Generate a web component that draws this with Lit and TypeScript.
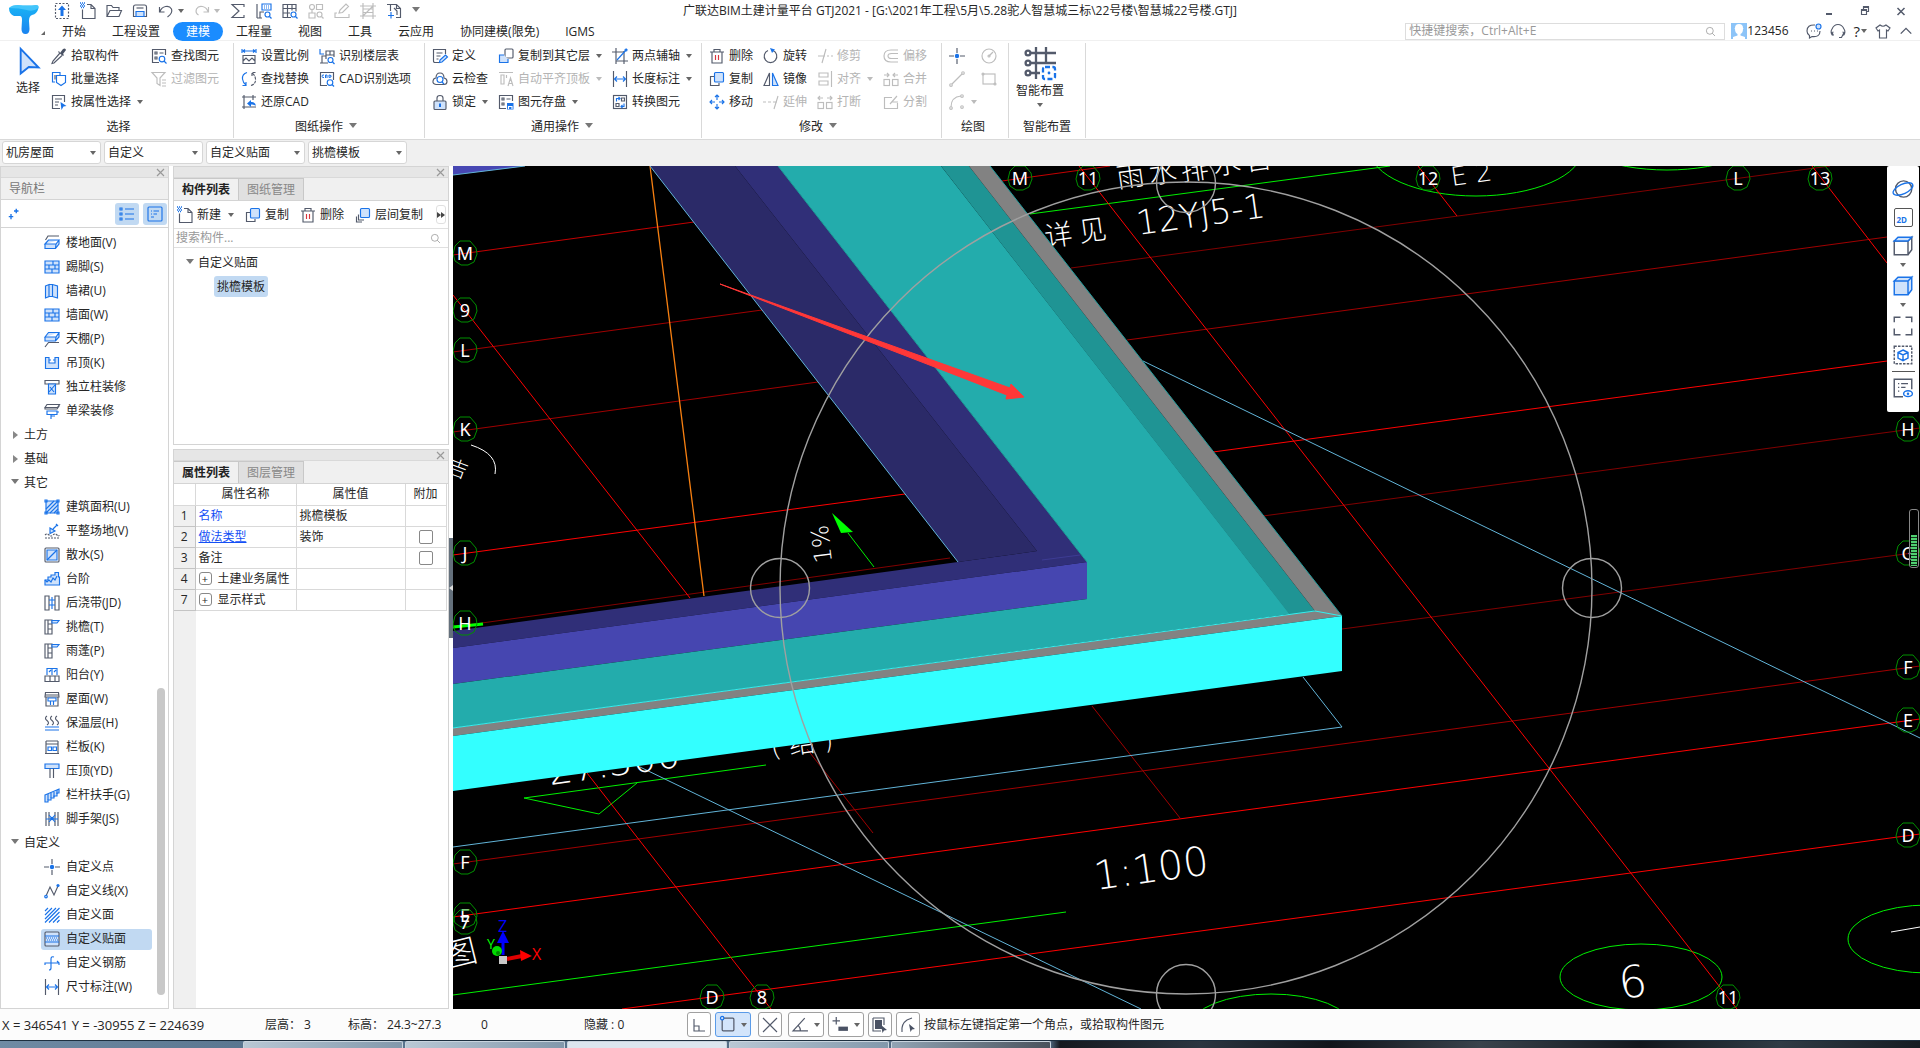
import { LitElement, html, svg, css, nothing, SVGTemplateResult } from "lit";
import { customElement, state } from "lit/decorators.js";
import { classMap } from "lit/directives/class-map.js";

type Art = SVGTemplateResult;

/* Icon artwork on a 16x16 grid. b = blue stroke, l = light fill, s = solid blue, k = solid dark. */
const ICONS: Record<string, Art> = {
  upload: svg`<rect x="1.5" y="0.5" width="13" height="15" stroke-dasharray="2 1.5"/><path class="s" d="M8 2.5 12 7H9.5v6h-3V7H4z"/>`,
  newFile: svg`<path d="M7 1.5h4l4 4v10H2.5V6.5M11 1.5v4h4"/><path class="b" d="M0 0h1M2 0h1M4 0h1M1 1.5h1M3 1.5h1M0 3h1M2 3h1M4 3h1M1 4.5h1M3 4.5h1" stroke-width="1.6"/>`,
  open: svg`<path d="M1 13.5v-11h4.5l1.5 2h6v3M1 13.5 4 7.5h11.5l-2.5 6z"/>`,
  save: svg`<path d="M1.5 4q0-2 2-2h9q2 0 2 2v9.5h-13z"/><path class="b l" d="M4 13.500V8.500h8v5z"/><path d="M4.500 5h7"/>`,
  undo: svg`<path d="M1.500 4v5h5M2 8.500C4 3 11 1.500 13.500 6q1.500 4-4 8"/>`,
  redo: svg`<path d="M14.500 4v5h-5M14 8.500C12 3 5 1.500 2.500 6q-1.500 4 2 6"/>`,
  sum: svg`<path d="M14 4V1.500H2L9 8l-7 6.500h12V12"/>`,
  floorSearch: svg`<path class="b" d="M6 1h9v6H6zM8 3h1M10 3h1M12 3h1M8 5h1M10 5h1M12 5h1"/><path d="M1 1v14M4 15V9h4M1 15h5"/><circle class="b" cx="11.500" cy="11.500" r="2.500"/><path class="b" d="m13.500 13.500 2 2"/>`,
  gridSearch: svg`<path d="M9 14.500H1v-13h13v7M1 5.500h13M1 10h7M5.500 1.500v13M10 1.500v6"/><circle class="b" cx="11.500" cy="11.500" r="2.500"/><path class="b" d="m13.500 13.500 2 2"/>`,
  partSearch: svg`<circle cx="4" cy="4" r="2.500"/><path d="M1 10h6v5H1zM8.500 1.500h6v5h-6zM4 6.500V10"/><circle cx="11.500" cy="11.500" r="2.500"/><path d="m13.500 13.500 2 2"/>`,
  pen: svg`<path d="m5 10 1-3 6-6 2.500 2.500-6 6zM3 10H1v4.500h14V11"/>`,
  rail: svg`<path d="M3 0v16M13 0v16M0 3h16M0 13h16M3 13 13 3M3 6h10M3 9.500h10"/>`,
  exportDoc: svg`<path d="M4.500 8V1.500H1M4.500 1.500h6l4 4v9H10M10.500 1.500v4h4M8 5l3 3v4"/><path class="b" d="M5 9v6.500M2 12.500h6"/>`,
  arrow: svg`<path class="b l" d="m3.500 0.500 11 11.500-6-.3-5 4z"/>`,
  pick: svg`<path class="k" d="m9 5 3-4q2.500-1.500 3 1l-3 4 1 1-1 1-5-4 1-1z"/><path d="m9 5-7 8-1 2.500 2-.5 8-7.500"/>`,
  batch: svg`<path class="b" d="M4 11H1.500V1.500H9V4"/><path d="m10 14.500-4.500-3V4.500h9V11.500z" class="b"/><path d="M4 8.500V4"/>`,
  propSelect: svg`<path d="M9 14.500H1.500v-13h12V8M4 5h7M4 8h4M4 11h3"/><path class="s" d="m9.500 8 6 4-3 .5L10.500 16z"/>`,
  findItem: svg`<path d="M8 14.500H1.500v-13h13V7M4 4h2v2H4zM8.500 5h4M4 9h2v2H4z"/><circle class="b" cx="11" cy="11" r="2.800"/><path class="b" d="m13 13 2.500 2.500"/>`,
  filter: svg`<path d="M1 1.500h13L9 7v7.500l-3-2V7zM11 9h4M11 12h4M11 15h4"/>`,
  scale: svg`<path class="b" d="M1 1v4M15 1v4M1 3h14M4 1.500 2 3l2 1.500M12 1.500 14 3l-2 1.500"/><path d="M2 7.500h12v8H2zM2 13l3-3 3 3 3-3 3 3"/>`,
  replace: svg`<path class="b" d="M6 1.500Q1 3 1.500 8q.5 4 3.500 6M5 11v3.500H1.500"/><path d="M10 14.500q5-1.500 4.500-6.500Q14 4 11 2M11 5V1.500h3.500" stroke-dasharray="3 1"/>`,
  restore: svg`<path d="M1 3h14M3 1v14M1 13h14M12 1v5"/><path class="s" d="M6 9.500 10 6v2q4-.5 5 4-2-2-5-1.500V13z"/>`,
  floorTable: svg`<path class="b" d="M1 1v5h4"/><path d="M3 15V8h4M1 15h8M7 11V3h8v6M11 3v4M7 7h8"/><circle class="b" cx="11.500" cy="12" r="2.500"/><path class="b" d="m13.500 14 2 2"/>`,
  cadOpt: svg`<path d="M8 14.500H1.500v-13h13V9"/><path class="b" d="M5 4q-2-.5-2 1.200T5 6.500M6.500 7V4h1.500v3M10 4v2.500q3 0 2-2z" stroke-width="1"/><circle class="b" cx="11" cy="11.500" r="2.800"/><path class="b" d="m13 13.500 2 2"/>`,
  define: svg`<path d="M7 14.500H3q-1.500 0-1.500-1.500V1.500h12V6M4.500 5h6M4.500 8h4M4.500 11h2"/><path class="b l" d="m8 12 5.500-5 2 2-5.500 5-2.500.5z"/>`,
  cloud: svg`<path d="M4 13.500q-3.500-.5-3-3.500T4 7q0-5 4-5t4 5q3 .5 3 3.500t-3 3z"/><circle class="b" cx="8" cy="8.500" r="3"/><path class="b" d="m10 11 2 2"/>`,
  lock: svg`<path d="M5 7V4q0-2.500 3-2.500T11 4v3"/><rect class="l" x="2" y="7" width="12" height="8.500" rx="1"/><path class="b" d="M8 9.500v3.500" stroke-width="2"/>`,
  copyFloor: svg`<rect x="7" y="1" width="8" height="9" rx="1"/><path class="b l" d="M6 7H1.500v7.500H10V11"/>`,
  align: svg`<path d="M1 1.500h14M3 4v9h3V4zM8.500 7V4M10 15l2.500-8L15 15M11 12.500h3"/>`,
  saveItem: svg`<path d="M8 14.500H1.500v-13h13V7M4 4h2v2H4zM8.500 5h4M4 9h2v2H4z"/><path class="s" d="M9 9h6.500v6.500H9z"/><path d="M10.500 15v-2.500H14V15" stroke="#fff"/>`,
  twoPoint: svg`<path d="M4 0v16M12 3v13M0 4h12M4 13h12"/><path class="b" d="M5 12 15 1"/><circle class="b" cx="14" cy="2" r="1"/>`,
  length: svg`<path d="M1.500 0v16M14.500 0v16"/><path class="b" d="M2 8h12M5 5.500 2.500 8 5 10.500M11 5.500 13.500 8 11 10.500"/>`,
  convert: svg`<rect x="1.500" y="1.500" width="13" height="13"/><path d="M4 9.500h3v3H4zM9.500 4h3v3h-3z"/><path class="b" d="M4.500 7.500V4.500H8M6.500 3 8 4.500 6.500 6M9 12.500h3V9.500M10.500 11 9 12.500 10.500 14"/>`,
  trash: svg`<path d="M1 4h14M5 4V1.500h6V4M3 4v11h10V4"/><path d="M6.500 7v5M9.500 7v5" stroke="#d9363e"/>`,
  copy: svg`<path d="M5 5.500H1.500v9H10V12"/><rect class="b l" x="5.500" y="1.500" width="9" height="9.500" rx="1"/>`,
  move: svg`<path class="b" d="M8 1v5M8 10v5M1 8h5M10 8h5M6 3l2-2 2 2M6 13l2 2 2-2M3 6 1 8l2 2M13 6l2 2-2 2"/>`,
  rotate: svg`<path d="M10 2.500A6.300 6.300 0 1 1 5 2.500"/><path class="s" d="M7 0l5 1.500L9 5z"/>`,
  mirror: svg`<path d="M6.500 2v12.500H1z"/><path class="b l" d="M9.500 2v12.500H15z"/>`,
  extend: svg`<path d="M0 8h3M5 8h3M10 8h4M15 2 11 15"/>`,
  trim: svg`<path d="M1 8h7M10 8h2M14 8h2M9 1 5 15"/>`,
  alignTo: svg`<path d="M14.500 0v16M2 2h9v4H2zM2 10h9v4H2z"/>`,
  breakUp: svg`<rect x="1" y="8.500" width="5.500" height="6"/><rect x="9.500" y="8.500" width="5.500" height="6"/><path d="M1 4h5M3 2 1 4l2 2M15 4h-5M13 2l2 2-2 2"/>`,
  merge: svg`<rect x="1" y="8.500" width="5.500" height="6"/><rect x="9.500" y="8.500" width="5.500" height="6"/><path d="M1 4h5M4 2 6 4 4 6M15 4h-5M12 2l-2 2 2 2"/>`,
  offset: svg`<path d="M15 2H8Q1 2 1 8t7 6h7M15 5.500H8.500Q5 5.500 5 8t3.500 2.500H15"/>`,
  split: svg`<path d="M9 3.500H1.500v11h13V9M7 10l7-8M9 8h6"/>`,
  point: svg`<path d="M8 0v5M8 11v5M0 8h5M11 8h5"/><circle class="s" cx="8" cy="8" r="2.200"/>`,
  line: svg`<path d="M3 13 13 3"/><circle cx="2" cy="14" r="1.300"/><circle cx="14" cy="2" r="1.300"/>`,
  arc: svg`<path d="M2 13Q2 3 12 2"/><circle cx="2" cy="14" r="1.300"/><circle cx="13" cy="2" r="1.300"/><circle cx="13" cy="13" r="1.300"/>`,
  circle: svg`<circle cx="8" cy="8" r="7"/><path d="m8 8 4-4"/><circle cx="8" cy="8" r="1"/>`,
  rect: svg`<rect x="2" y="3" width="12" height="10"/><circle cx="2" cy="3" r="1"/><circle cx="14" cy="13" r="1"/>`,
  smart: svg`<path d="M3 3h13M3 8h13M3 13h5M6 0v16M11 0v8"/><circle cx="2" cy="3" r="1.200"/><circle cx="2" cy="8" r="1.200"/><circle cx="2" cy="13" r="1.200"/><rect class="b" x="9.500" y="10" width="6" height="6" rx="1" stroke-dasharray="2.500 1.200"/><circle class="s" cx="12.500" cy="13" r=".7"/>`,
  slab: svg`<path class="b l" d="M1 9 4.500 5H15L12 9zM1 9v4.500h10.500L15 9V5M12 9l-.5 4.500"/><path d="M1.500 5 4 1h11"/>`,
  brick: svg`<path class="b l" d="M1 2h14v12H1z"/><path class="b" d="M1 6h14M1 10h14M9 2v4M5 6v4M11 6v4M8 10v4"/>`,
  book: svg`<path class="b l" d="M1.500 3 5 1.500v12L1.500 15zM5 1.500h3.500v12H5M8.500 1.500 13.500 3v12l-5-1.500"/>`,
  ceiling: svg`<path class="b l" d="M1 6 4.500 1.500H15L12 6zM1 6v4h10.500L15 6V1.500M12 6l-.5 4"/><path d="m1 16 3.500-4.500H15"/>`,
  hang: svg`<path class="b l" d="M1.500 2.500H5V8h6V2.500h3.500v11h-13zM5 5h2M9 5h2"/>`,
  column: svg`<path d="M1 1.500h14V5H1z"/><path class="b l" d="M4.500 5h7v10h-7z"/><path class="b" d="m5 13 6-7M6 8l4 5"/>`,
  beam: svg`<path d="M1 4.500 3 1.500h12.500l-2 3zM1 4.500V6h12l2.500-3.500"/><path class="b" d="M3 8h10v3.500H3zM13 9h2M7 11.500V16M7 13h4"/>`,
  area: svg`<path class="b l" d="M2 2h12v12H2z"/><path class="b" d="m2 10 8-8M2 14 14 2M6 14l8-8M10 14l4-4"/><path class="b" d="M1 1h2v2H1zM13 1h2v2h-2zM1 13h2v2H1zM13 13h2v2h-2z"/>`,
  ground: svg`<path class="b l" d="m6 5 5 3-5 2.500zM9 6l4-4M12 1l2 2"/><path d="M1 12q2-2 4 0t4 0 4 0 2 0M1 15h14" stroke-dasharray="2 1"/>`,
  apron: svg`<rect x="1" y="1" width="14" height="14" rx="1"/><path class="b l" d="M3 3h10v10H3z"/><path class="b" d="M3 13 13 3"/>`,
  stairs: svg`<path class="b l" d="M1 14V9h3V6h3V4h4V1.500h3.500V6h1v8z"/><path class="b" d="m1 9 2 2 2-2 2 2 2-4 2 2 2-4"/>`,
  postcast: svg`<path d="M1 1h4v14H1zM11 1h4v14h-4z"/><path class="b" d="M5 5h6M5 10h6M8 2v12"/>`,
  eave: svg`<path d="M1 1h7v14H1zM4 1v14M4 5h4M4 10h4"/><path class="b l" d="M8 1.500h7L13 4H8z"/>`,
  balcony: svg`<path class="b" d="M3 8V1.500h10V8M8 1.500V8M5 5l2-2M10 5l2-2"/><path d="M1 9h14v5.500H1zM6 9v5M11 9v5"/>`,
  roof: svg`<path d="M1.500 1.500h13L15 6H1zM2 6v9h12V6M1 4h14"/><path class="b" d="M4 7h8v3H4zM6.500 14v-4h3v4"/>`,
  heat: svg`<path d="M3 1q-3 2 0 4.500T3 10M8 1q-3 2 0 4.500T8 10M13 1q-3 2 0 4.500T13 10"/><path class="b" d="M1 12h14M1 15h14"/>`,
  railPanel: svg`<path d="M2 2h12M2 2v12M14 2v12M1 14.500h14M2 5h12"/><path class="b" d="M4 8h3.500v3.500H4zM9 8h3.500v3.500H9z"/>`,
  cap: svg`<path class="b l" d="M1 1h14v4.500H1z"/><path d="M6 5.500V15M9.500 5.500V15"/>`,
  handrail: svg`<path class="b l" d="M1 8 15 2v4h-2v3h-3v2H7v2H4v2H1z"/><path class="b" d="M4 7v6M7 6v5M10 5v5M13 3v4"/>`,
  scaffold: svg`<path d="M2 1v14M5 1v14M11 1v14M14 1v14"/><path class="b" d="m5 4 6 7M5 11l6-7M2 8h12"/><circle class="s" cx="8" cy="7.500" r="1.800"/>`,
  polyline: svg`<path d="M2 13 6 4l4 8 4-9"/><circle class="b l" cx="2" cy="13.500" r="1.300"/><circle class="s" cx="14" cy="2.500" r="1.600"/>`,
  hatch: svg`<path class="b" d="M1 4l3-3M1 8l7-7M1 12 12 1M1 15.500 15.500 1M5 15.500 15.500 5M9 15.500l6.500-6.500M13 15.500l2.500-2.500"/>`,
  facing: svg`<rect class="l" x="1" y="1" width="14" height="14" rx="1"/><path class="b" d="M1 5h14M1 11h14"/><path class="b" d="M2 7h12M3 9h12" stroke-dasharray="1 1"/>`,
  rebar: svg`<path class="b" d="M1 10V8h14v2M13 6l2 2M10 2q-3-1-3 2v9q0 2-2 2"/>`,
  list: svg`<path class="b" d="M1 2h2v2H1zM1 7h2v2H1zM1 12h2v2H1zM6 3h9M6 8h9M6 13h9"/>`,
  card: svg`<rect class="b" x="1" y="1" width="14" height="14" rx="1"/><path class="b" d="M4 5h1M6.500 5H12M4 8h1M6.500 8H10M4 11h3"/>`,
  plus2: svg`<path class="b" d="M11 1v6M8 4h6M4 8v7M1 11.500h6" stroke-width="1.800"/>`,
  layerCopy: svg`<path d="M3.500 7.500V13H9M1.500 9.500V15H7"/><rect class="b l" x="5.500" y="1.500" width="9" height="9" rx="1"/>`,
  search: svg`<circle cx="7" cy="7" r="5"/><path d="m10.500 10.500 4 4"/>`,
  orbit: svg`<circle cx="8.500" cy="8" r="6.500"/><ellipse class="b" cx="8" cy="8" rx="8.500" ry="3.800" transform="rotate(-25 8 8)"/>`,
  cube: svg`<path d="M1 4h11v11H1zM12 4l3-3v10l-3 4"/><path class="b l" d="m1 4 3-3h11l-3 3z"/>`,
  cubeFull: svg`<path class="b l" d="M1 4h11v11H1zM12 4l3-3v10l-3 4M1 4l3-3h11l-3 3z"/>`,
  frame: svg`<path d="M1 5V1h5M10 1h5v4M15 10v5h-5M6 15H1v-5"/>`,
  cubeBox: svg`<rect x="1" y="1" width="14" height="14" stroke-dasharray="2 1"/><path class="b" d="m8 4 4 2v4.500l-4 2-4-2V6zM4 6l4 2 4-2M8 8v4"/>`,
  listEye: svg`<path d="M8 15H1V1h14v8M4 4.500h1M6.500 4.500H12M4 7.500h1M6.500 7.500H10M4 10.500h1"/><ellipse class="b" cx="12" cy="12.500" rx="3.500" ry="2.300"/><circle class="s" cx="12" cy="12.500" r="1"/>`,
  chat: svg`<path d="M9 2Q1 1.500 1 8q0 3 2.500 4.500V15l2.500-1.500q8 1 8-5.500M5 8h1M8 8h1M11 8h1"/><circle class="b l" cx="12.500" cy="3.500" r="2.500"/>`,
  headset: svg`<path d="M2.500 12.500Q0 9 2 6q2-4.500 6-4.500T14 6q2 3-.5 6.500M3.500 9l-1.500.5 1.500 3M12.500 9l1.500.5-2.500 5H9"/>`,
  shirt: svg`<path d="M5 2 1 5l2 3 1.500-1v8h7V7L13 8l2-3-4-3Q8 4.500 5 2z"/>`,
  up: svg`<path d="m2 11 6-6 6 6" stroke-width="1.600"/>`,
  ortho: svg`<path d="M3 2v12h11M3 9h5v5"/>`,
  rectTool: svg`<rect x="3" y="2" width="11" height="12" rx="1"/><circle class="b l" cx="3" cy="2" r="1.600"/>`,
  cross: svg`<path d="m1 1 14 14M15 1 1 15"/>`,
  angle: svg`<path d="M15 14H1L12 2M8 14q0-3-2-5"/>`,
  plusBar: svg`<path d="M4 1v7M0.500 4.500h7"/><path class="k" d="M6 10h9v4H6z"/>`,
  pages: svg`<path class="k" d="M3 3h7v9H3z"/><path d="M1 1h11v7M1 1v13h8"/><path class="k" d="m9 8 6 5-3 .5-1.500 2.500z"/>`,
  corner: svg`<path d="M2 15Q1 7 7 3l5-2"/><path class="k" d="m9 7 6 5-3 .5L10.500 15z"/>`,
};

const icon = (name: string, size = 16) =>
  html`<svg class="ic" viewBox="0 0 16 16" width=${size} height=${size} aria-hidden="true">${ICONS[name]}</svg>`;
const caret = (cls = "") => html`<i class="caret ${cls}"></i>`;

interface Cmd { i: string; t: string; off?: boolean; c?: boolean; }
interface Group { name: string; label: string; more?: boolean; cols: Cmd[][]; }

const GROUPS: Group[] = [
  { name: "g1", label: "选择", cols: [
    [{ i: "pick", t: "拾取构件" }, { i: "batch", t: "批量选择" }, { i: "propSelect", t: "按属性选择", c: true }],
    [{ i: "findItem", t: "查找图元" }, { i: "filter", t: "过滤图元", off: true }] ] },
  { name: "g2", label: "图纸操作", more: true, cols: [
    [{ i: "scale", t: "设置比例" }, { i: "replace", t: "查找替换" }, { i: "restore", t: "还原CAD" }],
    [{ i: "floorTable", t: "识别楼层表" }, { i: "cadOpt", t: "CAD识别选项" }] ] },
  { name: "g3", label: "通用操作", more: true, cols: [
    [{ i: "define", t: "定义" }, { i: "cloud", t: "云检查" }, { i: "lock", t: "锁定", c: true }],
    [{ i: "copyFloor", t: "复制到其它层", c: true }, { i: "align", t: "自动平齐顶板", off: true, c: true }, { i: "saveItem", t: "图元存盘", c: true }],
    [{ i: "twoPoint", t: "两点辅轴", c: true }, { i: "length", t: "长度标注", c: true }, { i: "convert", t: "转换图元" }] ] },
  { name: "g4", label: "修改", more: true, cols: [
    [{ i: "trash", t: "删除" }, { i: "copy", t: "复制" }, { i: "move", t: "移动" }],
    [{ i: "rotate", t: "旋转" }, { i: "mirror", t: "镜像" }, { i: "extend", t: "延伸", off: true }],
    [{ i: "trim", t: "修剪", off: true }, { i: "alignTo", t: "对齐", off: true, c: true }, { i: "breakUp", t: "打断", off: true }],
    [{ i: "offset", t: "偏移", off: true }, { i: "merge", t: "合并", off: true }, { i: "split", t: "分割", off: true }] ] },
];

const QAT: [string, boolean, boolean][] = [
  ["upload", false, false], ["newFile", false, false], ["open", false, false], ["save", false, false],
  ["undo", false, true], ["redo", true, true], ["sum", false, false], ["floorSearch", false, false],
  ["gridSearch", false, false], ["partSearch", true, false], ["pen", true, false], ["rail", true, false], ["exportDoc", false, false],
];

const TABS = ["开始", "工程设置", "建模", "工程量", "视图", "工具", "云应用", "协同建模(限免)", "IGMS"];

interface Node { t: string; i?: string; open?: boolean; }
const TREE: Node[] = [
  { t: "楼地面(V)", i: "slab" }, { t: "踢脚(S)", i: "brick" }, { t: "墙裙(U)", i: "book" }, { t: "墙面(W)", i: "brick" },
  { t: "天棚(P)", i: "ceiling" }, { t: "吊顶(K)", i: "hang" }, { t: "独立柱装修", i: "column" }, { t: "单梁装修", i: "beam" },
  { t: "土方" }, { t: "基础" }, { t: "其它", open: true },
  { t: "建筑面积(U)", i: "area" }, { t: "平整场地(V)", i: "ground" }, { t: "散水(S)", i: "apron" }, { t: "台阶", i: "stairs" },
  { t: "后浇带(JD)", i: "postcast" }, { t: "挑檐(T)", i: "eave" }, { t: "雨蓬(P)", i: "eave" }, { t: "阳台(Y)", i: "balcony" },
  { t: "屋面(W)", i: "roof" }, { t: "保温层(H)", i: "heat" }, { t: "栏板(K)", i: "railPanel" }, { t: "压顶(YD)", i: "cap" },
  { t: "栏杆扶手(G)", i: "handrail" }, { t: "脚手架(JS)", i: "scaffold" }, { t: "自定义", open: true },
  { t: "自定义点", i: "point" }, { t: "自定义线(X)", i: "polyline" }, { t: "自定义面", i: "hatch" },
  { t: "自定义贴面", i: "facing" }, { t: "自定义钢筋", i: "rebar" }, { t: "尺寸标注(W)", i: "length" },
];

/* Grid axes: x1, y1, x2, y2, tone */
const AXES: [number, number, number, number, string][] = [
  [453, 255, 694, 222, "r2"], [453, 352, 762, 310, "r3"], [453, 432, 818, 382, "r3"], [453, 555, 905, 494, "r1"],
  [453, 627, 950, 558, "r4"], [453, 295, 690, 598, "r1"], [1002, 181, 1110, 166, "r2"], [1071, 268, 1830, 166, "r4"],
  [1127, 340, 1887, 237, "r3"], [1213, 452, 1887, 361, "r1"], [1263, 516, 1920, 428, "r4"], [1342, 629, 1920, 552, "r4"],
  [453, 864, 1920, 666, "r3"], [453, 917, 1920, 719, "r1"], [622, 1009, 1920, 834, "r1"], [587, 773, 771, 1009, "r1"],
  [807, 749, 873, 833, "r3"], [1092, 706, 1180, 818, "r3"], [1079, 166, 1737, 1009, "r1"], [1418, 166, 1457, 216, "r1"],
  [1812, 166, 1887, 263, "r1"],
];
const BUBBLES: [string, number, number][] = [
  ["M", 465, 253], ["9", 465, 310], ["L", 465, 350], ["K", 465, 429], ["J", 465, 553], ["H", 465, 623], ["F", 465, 862],
  ["E", 465, 915], ["7", 465, 922], ["D", 712, 997], ["8", 762, 997], ["M", 1020, 178], ["11", 1088, 178], ["12", 1428, 178],
  ["L", 1738, 178], ["13", 1820, 178], ["H", 1908, 429], ["G", 1908, 553], ["F", 1908, 667], ["E", 1908, 720],
  ["D", 1908, 835], ["11", 1728, 997],
];
const BUBBLE_RING = [[-5, -12], [5, -12], [11, -5], [12, 1], [9, 9], [3, 12], [-4, 12], [-10, 8], [-12, 1], [-10, -7]];

@customElement("app-root")
export class AppRoot extends LitElement {
  @state() private tab = "建模";
  @state() private node = "自定义贴面";

  static styles = css`
    :host { display: block; font: 12px/16px "Open Sans", "Noto Sans CJK SC", sans-serif; color: #262626; }
    * { box-sizing: border-box; }
    button { font: inherit; color: inherit; background: none; border: 0; padding: 0; margin: 0; white-space: nowrap; cursor: pointer; }
    button:disabled { color: #b4b4b4; cursor: default; }
    input, select { font: inherit; color: inherit; }
    .ic { display: block; flex: none; fill: none; stroke: #535a6b; stroke-width: 1.15; overflow: visible; }
    .ic .b { stroke: #1a73e8; }
    .ic .l { fill: #cfe2fb; }
    .ic .s { fill: #1a73e8; stroke: none; }
    .ic .k { fill: #4a5264; stroke: none; }
    button:disabled .ic, button:disabled .ic .b { stroke: #bdbdbd; }
    .caret { display: block; flex: none; border: 3px solid transparent; border-top: 4px solid #666; border-bottom: 0; width: 0; height: 0; }
    button:disabled .caret { border-top-color: #bbb; }
    .caret.right { border: 4px solid transparent; border-left: 5px solid #888; border-right: 0; }
    .caret.big { border-width: 4px; border-top-width: 5px; border-bottom: 0; border-top-color: #777; }

    .app { height: 100vh; min-height: 640px; display: flex; flex-direction: column; overflow: hidden; background: #fff; }

    .header { display: grid; grid-template: 21px 19px / 49px 1fr; border-bottom: 1px solid #f0f0f0; flex: none; }
    .logo { grid-area: 1 / 1 / 3 / 2; display: flex; align-items: flex-end; padding: 0 0 5px 8px; z-index: 1; }
    .logo .caret { border: 0; border-left: 4px solid transparent; border-bottom: 4px solid #666; }
    .titlebar { grid-area: 1 / 1 / 2 / 3; display: grid; grid-template-columns: 1fr auto 1fr; align-items: center; }
    .qat { display: flex; gap: 6px; padding-left: 52px; align-items: center; }
    .qat button { display: flex; align-items: center; padding: 0 2px; gap: 4px; height: 20px; }
    .title { font-size: 12px; font-weight: 400; margin: 0; white-space: nowrap; }
    .win { display: flex; justify-content: flex-end; gap: 20px; padding-right: 11px; }
    .tabrow { grid-area: 2 / 2 / 3 / 3; display: flex; align-items: flex-start; padding-top: 1px; }
    .tabs { display: flex; }
    .tabs button { padding: 0 13px; height: 19px; line-height: 19px; }
    .tabs .on { background: #1a8cff; color: #fff; border-radius: 10px; }
    .account { margin-left: auto; display: flex; align-items: center; padding: 0 7px 0 0; height: 18px; }
    .find { display: flex; align-items: center; width: 320px; height: 17px; border: 1px solid #ddd; padding: 0 8px 0 3px; }
    .find input { flex: 1; border: 0; outline: 0; padding: 0; height: 14px; line-height: 14px; min-width: 0; background: none; }
    input::placeholder { color: #999; opacity: 1; }
    .avatar { margin-left: 6px; display: block; }
    .tools { display: flex; align-items: center; gap: 8px; margin-left: 17px; }
    .tools button { display: flex; align-items: center; font-size: 15px; gap: 1px; }

    .ribbon { display: flex; height: 99px; flex: none; border-bottom: 1px solid #d9d9d9; padding: 2px 0 1px; }
    .group { display: grid; grid-template-rows: 1fr 22px; border-right: 1px solid #d9d9d9; padding: 1px 13px 0 7px; }
    .group .cols { display: flex; gap: 10px; }
    .g1 { padding-left: 0; padding-right: 14px; }
    .g1 .cols { gap: 8px; }
    .g1 .big { width: 56px; margin-right: -13px; padding-top: 4px; gap: 6px; }
    .g1 .glabel { padding-left: 18px; }
    .g3 { padding-right: 9px; }
    .g4 { padding-right: 14px; }
    .col { display: flex; flex-direction: column; }
    .cmd { display: flex; align-items: center; gap: 4px; height: 23px; }
    .cmd .caret { margin-left: 2px; }
    .big { display: flex; flex-direction: column; align-items: center; gap: 4px; padding-top: 3px; }
    .glabel { display: flex; align-items: center; justify-content: center; gap: 6px; }
    .draw .cols { gap: 4px; }
    .draw { padding: 1px 11px 0 7px; }
    .place { min-width: 77px; padding: 1px 7px 0; }

    .combos { display: flex; gap: 3px; height: 26px; flex: none; padding: 1px 2px 2px; background: #f0f0f0; }
    .combo { display: grid; align-items: center; width: 99px; }
    .combo select { grid-area: 1 / 1; appearance: none; width: 100%; height: 23px; border: 1px solid #d6d6d6; border-radius: 3px; background: #fff; padding: 0 16px 0 3px; }
    .combo .caret { grid-area: 1 / 1; justify-self: end; margin-right: 5px; }

    .work { display: flex; flex: 1; min-height: 0; }
    .panel { border: 1px solid #d4d4d4; background: #fff; display: flex; flex-direction: column; min-height: 0; }
    .strip { height: 11px; flex: none; background: #e6e6e6; display: flex; justify-content: flex-end; align-items: center; padding-right: 3px; border-bottom: 1px solid #d9d9d9; }
    .strip svg { stroke: #999; }
    .nav { width: 169px; flex: none; }
    .navhead { height: 22px; flex: none; line-height: 22px; padding-left: 8px; background: #f0f0f0; color: #777; border-bottom: 1px solid #d4d4d4; }
    .navtools { height: 28px; flex: none; display: flex; gap: 4px; align-items: center; padding: 0 1px 0 7px; border-bottom: 1px solid #d4d4d4; }
    .navtools .toggle { width: 24px; height: 22px; display: grid; place-items: center; background: #c1d9f2; border-radius: 3px; }
    .navtools .toggle:nth-of-type(2) { margin-left: auto; }
    .treebox { display: flex; flex: 1; min-height: 0; overflow: hidden; padding-top: 3px; }
    .tree { flex: 1; list-style: none; margin: 0; padding: 0; }
    .tree li { height: 24px; display: flex; align-items: center; padding-left: 40px; }
    .tree li.branch { padding-left: 9px; }
    .tree button { display: flex; align-items: center; gap: 6px; height: 21px; width: 111px; padding-left: 3px; border-radius: 3px; }
    .tree .branch button { gap: 4px; padding-left: 0; }
    .tree .branch .caret { margin: 0 1px; }
    .tree .branch .caret.right { margin: 0 2px 0 3px; }
    .tree .sel { background: #c1d9f2; }
    .scroll { width: 8px; margin: auto 3px 13px 0; height: 307px; background: #c8c8c8; border-radius: 4px; }

    .mid { width: 276px; flex: none; margin-left: 4px; display: flex; flex-direction: column; gap: 4px; }
    .comp { height: 279px; flex: none; }
    .props { flex: 1; }
    .ptabs { display: flex; background: #f0f0f0; height: 23px; flex: none; border-bottom: 1px solid #d4d4d4; }
    .ptabs button { width: 65px; border-right: 1px solid #c8c8c8; color: #888; background: #e0e0e0; border-top: 1px solid #c8c8c8; }
    .ptabs button.on { font-weight: 700; color: #222; background: #f0f0f0; }
    .ctools { display: flex; height: 28px; flex: none; align-items: center; border-bottom: 1px solid #e0e0e0; padding: 0 2px 0 3px; gap: 11px; }
    .ctools button { display: flex; align-items: center; gap: 4px; }
    .ctools .caret { margin-left: 3px; }
    .ctools .more { margin-left: auto; width: 10px; height: 19px; border: 1px solid #e0e0e0; border-radius: 3px; justify-content: center; gap: 0; }
    .ctools .more .caret { border-width: 3px; border-left-width: 4px; border-right: 0; border-left-color: #444; margin: 0; }
    .csearch { display: flex; height: 19px; flex: none; align-items: center; border-bottom: 1px solid #e0e0e0; padding: 0 7px 0 2px; }
    .csearch input { flex: 1; border: 0; outline: 0; padding: 0; height: 16px; }
    .csearch .ic, .find .ic { stroke: #999; }
    .ctree { padding: 3px 12px; }
    .ctree .row { display: flex; align-items: center; gap: 4px; height: 24px; }
    .ctree .leaf { padding: 0 3px; height: 21px; margin: 1px 0 0 28px; background: #c1d9f2; border-radius: 3px; }

    .gridbox { flex: 1; background: linear-gradient(90deg, #f0f0f0 22px, #fff 22px); }
    table { border-collapse: collapse; table-layout: fixed; width: 272px; }
    .c1 { width: 21px; } .c2 { width: 101px; } .c3 { width: 109px; } .c4 { width: 41px; }
    th, td { font-weight: 400; height: 21px; padding: 0 3px; border: 1px solid #d9d9d9; text-align: left; line-height: 16px; white-space: nowrap; }
    th { background: #fff; text-align: center; border-top: 0; }
    th:first-child, td:first-child { border-left: 0; }
    td:first-child { background: #f0f0f0; text-align: center; border-color: #c4c4c4; border-left: 0; }
    td:last-child { text-align: center; }
    td .hl { color: #1450f5; }
    td a { color: #1450f5; }
    td input { appearance: none; display: block; margin: 0 auto; width: 14px; height: 14px; border: 1px solid #888; border-radius: 2px; background: #fff; }
    .exp { display: flex; align-items: center; gap: 6px; }
    .exp button { width: 13px; height: 13px; border: 1px solid #888; border-radius: 3px; line-height: 10px; font-size: 11px; }

    .handle { width: 4px; flex: none; display: grid; align-items: center; }
    .handle button { height: 100px; background: #64707c; display: grid; place-items: center; }
    .handle .caret { border: 3px solid transparent; border-right: 4px solid #ddd; border-left: 0; }

    .stage { position: relative; flex: 1; min-width: 0; background: #000; overflow: hidden; }
    .scene { display: block; width: 100%; height: 100%; font-family: "Open Sans", sans-serif; }
    .scene line, .scene path, .scene ellipse, .scene circle { fill: none; }
    .r1 { stroke: #f00; } .r2 { stroke: #c40000; } .r3 { stroke: #a00000; } .r4 { stroke: #800000; }
    .scene .green { stroke: #00f000; }
    .scene .sky { stroke: #62b4d8; }
    .scene .grey { stroke: #a0a0a0; stroke-width: 1.4; }
    .scene .white { stroke: #fff; }
    .scene .orange { stroke: #f88010; stroke-width: 1.3; }
    .scene .bubble { stroke: #009000; fill: none; }
    .axis { fill: #fff; font: 18px "Noto Sans", sans-serif; text-anchor: middle; }
    .cad { fill: #fff; font-family: "DejaVu Sans", "Noto Sans CJK SC", sans-serif; font-weight: 200; }
    .view { position: absolute; top: 0; right: 1px; width: 32px; height: 246px; background: #fff; border-radius: 2px; display: flex; flex-direction: column; align-items: center; padding-top: 13px; gap: 9px; }
    .view button { display: flex; flex-direction: column; align-items: center; gap: 7px; }
    .view hr { width: 23px; margin: -3px 0; border: 0; border-top: 1px solid #555; }
    .view .two { width: 19px; height: 19px; border: 1px solid #555; border-radius: 2px; color: #1a73e8; font: 700 8px/22px "Open Sans", sans-serif; align-items: flex-start; padding-left: 2px; }
    .meter { position: absolute; right: 1px; top: 343px; width: 10px; height: 59px; border: 1px solid #888; border-radius: 3px; padding: 25px 1px 1px; background: rgba(0,0,0,.55); }
    .meter i { display: block; height: 100%; background: repeating-linear-gradient(#4fd070 0 2px, #10301a 2px 3px); }

    .status { display: flex; height: 31px; flex: none; align-items: center; background: #fcfcfc; padding-left: 2px; white-space: nowrap; }
    .status output { display: block; }
    .w263 { width: 263px; font-size: 13px; } .w83 { width: 83px; } .w133 { width: 133px; } .w103 { width: 103px; }
    .snap { display: flex; gap: 4px; margin-right: 4px; }
    .snap button { height: 25px; min-width: 24px; border: 1px solid #a0a0a0; border-radius: 3px; display: flex; align-items: center; justify-content: center; gap: 5px; background: #fff; padding: 0 3px; }
    .snap .on { background: #d3e5fb; border-color: #5a9be8; margin-right: 3px; }
    .snap .x { margin-right: 2px; }
    .taskbar { display: flex; gap: 2px; height: 8px; flex: none; border-top: 1px solid #1d2f3f; background: linear-gradient(90deg, #6f8ba4, #5a7690 243px, #50687f 1050px, #15191f 1060px, #2b3540 1200px, #11151b 1330px, #39434c 1480px, #12171d 1640px, #2f3b45 1780px, #161c22); padding-left: 243px; }
    .task { width: 160px; border: 1px solid #c8d4de; border-bottom: 0; border-radius: 2px 2px 0 0; background: linear-gradient(90deg, #b9c8d5, #8298ab); }
    .task.lit { background: #dbe5ee; }
    .task.dim { background: linear-gradient(90deg, #91a4b4, #49525c); }
  `;

  private cmd(c: Cmd) {
    return html`<button class="cmd" ?disabled=${!!c.off}>${icon(c.i)}<span>${c.t}</span>${c.c ? caret() : nothing}</button>`;
  }

  private header() {
    return html`<header class="header">
      <div class="logo">
        <svg width="33" height="30" viewBox="0 0 33 30" aria-hidden="true">
          <defs><linearGradient id="lg" x1="0" y1="0" x2="0" y2="1"><stop offset="0" stop-color="#19b5f5"/><stop offset="1" stop-color="#1a83f0"/></linearGradient></defs>
          <path fill="url(#lg)" d="M1 3Q4 0 10 0q10 1 18 0 3 0 2.500 3-1.500 6-6.500 7-3 1-3 6l.5 8q0 5-4 5t-4-5l.5-9q0-4-2-4H6Q1 9 1 3z"/>
          <path fill="#5fd2ff" opacity=".6" d="M1 3Q4 0 10 0q10 1 18 0 3 0 2.500 3-5 4-12 2T1 3z"/>
        </svg>
        ${caret()}
      </div>
      <div class="titlebar">
        <div class="qat">
          ${QAT.map(([n, off, c]) => html`<button ?disabled=${off} aria-label=${n}>${icon(n)}${c ? caret() : nothing}</button>`)}
          <button aria-label="more">${caret("big")}</button>
        </div>
        <h1 class="title">广联达BIM土建计量平台 GTJ2021 - [G:\\2021年工程\\5月\\5.28驼人智慧城三标\\22号楼\\智慧城22号楼.GTJ]</h1>
        <div class="win">
          <button aria-label="minimize"><svg class="ic" width="16" height="16" viewBox="0 0 16 16"><path d="M5 11h6" stroke-width="2"/></svg></button>
          <button aria-label="restore"><svg class="ic" width="16" height="16" viewBox="0 0 16 16"><path d="M4.500 6.500h5v5h-5zM4.500 7.500h5M6.500 6V3.500h5v5H10M6.500 4.500h5"/></svg></button>
          <button aria-label="close"><svg class="ic" width="16" height="16" viewBox="0 0 16 16"><path d="m4.500 5 7 7M11.500 5l-7 7" stroke-width="1.500"/></svg></button>
        </div>
      </div>
      <div class="tabrow">
        <nav class="tabs">${TABS.map(t => html`<button class=${classMap({ on: t === this.tab })} @click=${() => (this.tab = t)}>${t}</button>`)}</nav>
        <div class="account">
          <label class="find"><input aria-label="快捷键搜索" placeholder="快捷键搜索，Ctrl+Alt+E">${icon("search", 11)}</label>
          <svg class="avatar" width="16" height="16" viewBox="0 0 16 16" aria-hidden="true"><path fill="#8cc4f8" d="M0 0h16v16H0z"/><path fill="#fff" d="M4 5q0-4 4-4t4 4l.5 1H12q0 4-2.500 5v1.500L14 14v2H2v-2l4.500-1.500V11Q4 10 4 6h-.5z"/></svg>
          <span>123456</span>
          <div class="tools">
            <button aria-label="chat">${icon("chat")}</button><button aria-label="support">${icon("headset")}</button>
            <button aria-label="help">?${caret()}</button><button aria-label="skin">${icon("shirt")}</button>
            <button aria-label="collapse">${icon("up", 14)}</button>
          </div>
        </div>
      </div>
    </header>`;
  }

  private ribbon() {
    return html`<section class="ribbon">
      ${GROUPS.map(g => html`<div class="group ${g.name}">
        <div class="cols">
          ${g.name === "g1" ? html`<button class="big">${icon("arrow", 26)}<span>选择</span></button>` : nothing}
          ${g.cols.map(c => html`<div class="col">${c.map(x => this.cmd(x))}</div>`)}
        </div>
        <div class="glabel">${g.label}${g.more ? caret("big") : nothing}</div>
      </div>`)}
      <div class="group draw">
        <div class="cols">
          <div class="col">
            <button class="cmd" aria-label="点">${icon("point")}</button>
            <button class="cmd" disabled aria-label="直线">${icon("line")}</button>
            <button class="cmd" disabled aria-label="弧">${icon("arc")}${caret()}</button>
          </div>
          <div class="col">
            <button class="cmd" disabled aria-label="圆">${icon("circle")}</button>
            <button class="cmd" disabled aria-label="矩形">${icon("rect")}</button>
          </div>
        </div>
        <div class="glabel">绘图</div>
      </div>
      <div class="group place">
        <div class="cols"><button class="big">${icon("smart", 32)}<span>智能布置</span>${caret()}</button></div>
        <div class="glabel">智能布置</div>
      </div>
    </section>`;
  }

  private nav() {
    return html`<aside class="panel nav">
      ${this.strip()}
      <div class="navhead">导航栏</div>
      <div class="navtools">
        <button aria-label="add">${icon("plus2", 12)}</button>
        <button class="toggle" aria-label="list">${icon("list")}</button>
        <button class="toggle" aria-label="card">${icon("card")}</button>
      </div>
      <div class="treebox">
        <ul class="tree">
          ${TREE.map(n => n.i
            ? html`<li><button class=${classMap({ sel: n.t === this.node })} @click=${() => (this.node = n.t)}>${icon(n.i)}<span>${n.t}</span></button></li>`
            : html`<li class="branch"><button>${n.open ? caret("big") : caret("right")}<span>${n.t}</span></button></li>`)}
        </ul>
        <div class="scroll"></div>
      </div>
    </aside>`;
  }

  private strip() {
    return html`<div class="strip"><svg class="ic" width="9" height="9" viewBox="0 0 9 9"><path d="m1 1 7 7M8 1 1 8"/></svg></div>`;
  }

  private mid() {
    return html`<div class="mid">
      <section class="panel comp">
        ${this.strip()}
        <div class="ptabs"><button class="on">构件列表</button><button>图纸管理</button></div>
        <div class="ctools">
          <button>${icon("newFile")}新建${caret()}</button>
          <button>${icon("copy")}复制</button>
          <button>${icon("trash")}删除</button>
          <button>${icon("layerCopy")}层间复制</button>
          <button class="more" aria-label="more">${caret("right")}${caret("right")}</button>
        </div>
        <label class="csearch"><input aria-label="搜索构件" placeholder="搜索构件...">${icon("search", 11)}</label>
        <div class="ctree">
          <div class="row">${caret("big")}<span>自定义贴面</span></div>
          <button class="leaf">挑檐模板</button>
        </div>
      </section>
      <section class="panel props">
        ${this.strip()}
        <div class="ptabs"><button class="on">属性列表</button><button>图层管理</button></div>
        <div class="gridbox">
          <table>
            <colgroup><col class="c1"><col class="c2"><col class="c3"><col class="c4"></colgroup>
            <tr><th></th><th>属性名称</th><th>属性值</th><th>附加</th></tr>
            <tr><td>1</td><td><span class="hl">名称</span></td><td>挑檐模板</td><td></td></tr>
            <tr><td>2</td><td><a href="#type">做法类型</a></td><td>装饰</td><td><input type="checkbox" aria-label="做法类型 附加"></td></tr>
            <tr><td>3</td><td>备注</td><td></td><td><input type="checkbox" aria-label="备注 附加"></td></tr>
            <tr><td>4</td><td><div class="exp"><button>+</button>土建业务属性</div></td><td></td><td></td></tr>
            <tr><td>7</td><td><div class="exp"><button>+</button>显示样式</div></td><td></td><td></td></tr>
          </table>
        </div>
      </section>
    </div>`;
  }

  private scene() {
    return html`<svg class="scene" viewBox="453 166 1467 843" preserveAspectRatio="xMinYMin slice" role="img" aria-label="三维视图">
      ${svg`
      <path class="green" d="M1030 214 1390 166M453 995 1066 912M524 798 766 765M524 798 599 814 637 783"/>
      <ellipse class="green" cx="1476" cy="150" rx="106" ry="46"/>
      <ellipse class="green" cx="1667" cy="124" rx="106" ry="46"/>
      <ellipse class="green" cx="1641" cy="977" rx="81" ry="33"/>
      <ellipse class="green" cx="1928" cy="939" rx="80" ry="34"/>
      <ellipse class="green" cx="1271" cy="1026" rx="80" ry="32"/>
      ${AXES.map(a => svg`<line class=${a[4]} x1=${a[0]} y1=${a[1]} x2=${a[2]} y2=${a[3]}/>`)}
      <path class="orange" d="M650 166 704 596"/>
      <path class="sky" d="M1143 361 1920 738M640 767 1141 1009M1303 677 1342 727 453 847"/>
      <path class="white" d="M471 445Q499 454 495 474M1891 932l29-5"/>
      <text class="cad" font-size="28" transform="translate(1118 188) rotate(-8)">雨</text>
      <text class="cad" font-size="28" transform="translate(1150 184) rotate(-8)">水</text>
      <text class="cad" font-size="28" transform="translate(1182 181) rotate(-8)">排</text>
      <text class="cad" font-size="28" transform="translate(1214 175) rotate(-8)">水</text>
      <text class="cad" font-size="28" transform="translate(1245 171) rotate(-8)">管</text>
      <text class="cad" font-size="28" transform="translate(1046 247) rotate(-8)">详</text>
      <text class="cad" font-size="28" transform="translate(1080 242) rotate(-8)">见</text>
      <text class="cad" font-size="34" transform="translate(1138 235) rotate(-8)">12YJ5-1</text>
      <text class="cad" font-size="26" transform="translate(1452 186) rotate(-8)">E 2</text>
      <text class="cad" font-size="40" transform="translate(1096 890) rotate(-8)">1:100</text>
      <text class="cad" font-size="44" transform="translate(1621 999) rotate(-8)">6</text>
      <text class="cad" font-size="38" transform="translate(550 785) rotate(-8)">27.300</text>
      <text class="cad" font-size="26" transform="translate(772 757) rotate(-8)">( 结 )</text>
      <text class="cad" font-size="24" transform="translate(832 562) rotate(-97)">1%</text>
      <text class="cad" font-size="20" transform="translate(446 472) rotate(20)">吉</text>
      <text class="cad" font-size="32" transform="translate(448 968) rotate(-14)">图</text>

      <path d="M453 166h72l-72 9z" style="fill:#4747b3"/><path class="sky" d="M525 166 453 175"/>
      <path d="M650 166h85L1037 551 958 562z" style="fill:#2b2a68"/>
      <path d="M735 166h43L1087 562 453 648V631L958 562 1037 551z" style="fill:#302f78"/>
      <path d="M453 648 1087 562V599L453 684z" style="fill:#4646b0"/>
      <path d="M778 166H941L1290 614 453 728V684L1087 599V562z" style="fill:#23acac"/>
      <path d="M941 166h28L1315 611l-25 4z" style="fill:#1f9494"/>
      <path d="M969 166h21L1342 616 453 736v-8L1315 611z" style="fill:#828282"/>
      <path d="M453 736 1342 616V671L453 791z" style="fill:#33ffff"/>
      <path d="M453 728 1315 611l27 5" style="stroke:#33f0f0"/>
      <path d="M990 166 1342 616M778 166 1087 562" style="stroke:#1f9c9c"/>
      <path class="sky" d="M650 166 958 562"/>
      <path d="M1042 560 1080 555" style="stroke:#3d3c94"/>
      <path d="M453 627 483 624" style="stroke:#0f0;stroke-width:3"/>
      <path d="M832 513 853 532 841 533z" style="fill:#0f0"/><path class="green" d="M848 533 874 567"/>

      <circle class="grey" cx="1186" cy="588" r="406"/>
      <circle class="grey" cx="780" cy="588" r="29.500"/><circle class="grey" cx="1592" cy="588" r="29.500"/>
      <circle class="grey" cx="1186" cy="183" r="29.500"/><circle class="grey" cx="1186" cy="994" r="29.500"/>

      ${BUBBLES.map(([t, x, y]) => svg`<polygon class="bubble" points="${BUBBLE_RING.map(p => `${x + p[0]},${y + p[1]}`).join(" ")}"/><text class="axis" x=${x} y=${y + 7}>${t}</text>`)}

      <path d="M720 284 1010 388 1011 384 1024 397 1006 399 1007 395z" style="fill:#ff3838;stroke:#ff3838"/>

      <path d="M503 955V938" style="stroke:#00f;stroke-width:3"/><path d="M503 931l6 12h-12z" style="fill:#00f"/>
      <path d="M507 959 522 956" style="stroke:#e00000;stroke-width:4"/><path d="M520 950l12 6-11 5z" style="fill:#f00"/>
      <circle cx="497" cy="951" r="5" style="fill:#0d0"/><circle cx="498" cy="953" r="2" style="fill:#080"/>
      <path d="M499 956h8v8h-8z" style="fill:#c8c8c8"/>
      <text x="498" y="932" font-size="16" style="fill:#00f">Z</text>
      <text x="487" y="949" font-size="14" style="fill:#0f0">Y</text>
      <text x="532" y="960" font-size="16" style="fill:#f00">X</text>
      `}
    </svg>`;
  }

  render() {
    return html`<div class="app">
      ${this.header()}
      ${this.ribbon()}
      <div class="combos">
        ${["机房屋面", "自定义", "自定义贴面", "挑檐模板"].map(v => html`<label class="combo"><select aria-label=${v}><option>${v}</option></select>${caret()}</label>`)}
      </div>
      <main class="work">
        ${this.nav()}
        ${this.mid()}
        <div class="handle"><button aria-label="collapse panel">${caret()}</button></div>
        <div class="stage">
          ${this.scene()}
          <div class="view">
            <button aria-label="orbit">${icon("orbit", 20)}</button>
            <button class="two">2D</button>
            <button aria-label="cube">${icon("cube", 20)}${caret()}</button>
            <button aria-label="solid">${icon("cubeFull", 20)}${caret()}</button>
            <button aria-label="fit">${icon("frame", 20)}</button>
            <button aria-label="region">${icon("cubeBox", 20)}</button>
            <hr>
            <button aria-label="display">${icon("listEye", 20)}</button>
          </div>
          <div class="meter"><i></i></div>
        </div>
      </main>
      <footer class="status">
        <output class="w263">X = 346541 Y = -30955 Z = 224639</output>
        <output class="w83">层高： 3</output>
        <output class="w133">标高： 24.3~27.3</output>
        <output class="w103">0</output>
        <output class="w103">隐藏 : 0</output>
        <div class="snap">
          <button aria-label="ortho">${icon("ortho")}</button>
          <button class="on" aria-label="rect">${icon("rectTool", 17)}${caret()}</button>
          <button class="x" aria-label="cross">${icon("cross")}</button>
          <button aria-label="angle">${icon("angle", 17)}${caret()}</button>
          <button aria-label="offset">${icon("plusBar", 17)}${caret()}</button>
          <button aria-label="pages">${icon("pages")}</button>
          <button aria-label="corner">${icon("corner")}</button>
        </div>
        <span>按鼠标左键指定第一个角点，或拾取构件图元</span>
      </footer>
      <div class="taskbar"><i class="task"></i><i class="task"></i><i class="task lit"></i><i class="task"></i><i class="task dim"></i></div>
    </div>`;
  }
}
